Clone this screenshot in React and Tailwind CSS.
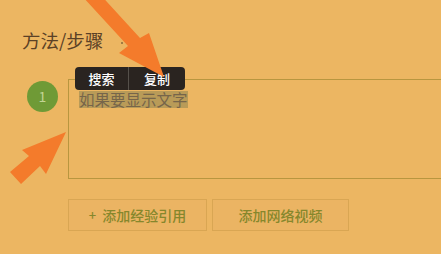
import React from 'react'

const font = { fontFamily: '"Noto Sans CJK SC", "Noto Sans", sans-serif' }

function Arrows() {
  return (
    <svg className="absolute inset-0 pointer-events-none" width="441" height="254" viewBox="0 0 441 254">
      {/* top arrow */}
      <path d="M82 -4 L97 -9 L140 38 L149 33 L164 77 L119 53 L128 46 Z" fill="#f47b2b" />
      {/* left arrow */}
      <path d="M10 172 L29 156 L22 150 L66 132 L46 174 L40 166 L21 184 Z" fill="#f47b2b" />
    </svg>
  )
}

export default function App() {
  return (
    <div className="relative w-[441px] h-[254px] overflow-hidden bg-[#ecb662]" style={font}>
      <div className="pl-[22px] pt-[29px]">
        <div className="flex items-center">
          <h1 className="text-[18.5px] leading-[22px] text-[#5b4126]">方法/步骤</h1>
          <span className="ml-[18px] mt-[6px] w-[2px] h-[2px] rounded-full bg-[#8a6a3a]" />
        </div>

        <div className="flex mt-[28px]">
          <div className="mt-[2px] ml-[5px] w-[31px] h-[31px] rounded-full bg-[#6f9a36] flex items-center justify-center text-[14px] text-[#c2d494]">1</div>
          <div className="ml-[10px] flex-1 -mr-4 h-[100px] border-[1.5px] border-[#b8963f] pl-[10px] pt-[7px]">
            <span className="text-[15.5px] leading-[17px] text-[#76654a] bg-[#b99b58] inline-block">如果要显示文字</span>
          </div>
        </div>

        <div className="flex gap-[5px] mt-[20px] ml-[46px]">
          <button className="w-[139px] h-[32px] border border-[#d9a653] bg-[#ebb463] text-[14px] font-medium text-[#86872c] flex items-center justify-center gap-[6px]">
            <span className="text-[13px]">+</span>添加经验引用
          </button>
          <button className="w-[137px] h-[32px] border border-[#d9a653] bg-[#ebb463] text-[14px] font-medium text-[#86872c] flex items-center justify-center">
            添加网络视频
          </button>
        </div>
      </div>

      <div className="absolute left-[75px] top-[67px] w-[110px] h-[23px] rounded-[4px] bg-[#2a2420] flex text-[13px] font-medium text-white">
        <div className="w-[53px] flex items-center justify-center">搜索</div>
        <div className="w-px bg-[#55504a]" />
        <div className="flex-1 flex items-center justify-center">复制</div>
      </div>

      <Arrows />
    </div>
  )
}
